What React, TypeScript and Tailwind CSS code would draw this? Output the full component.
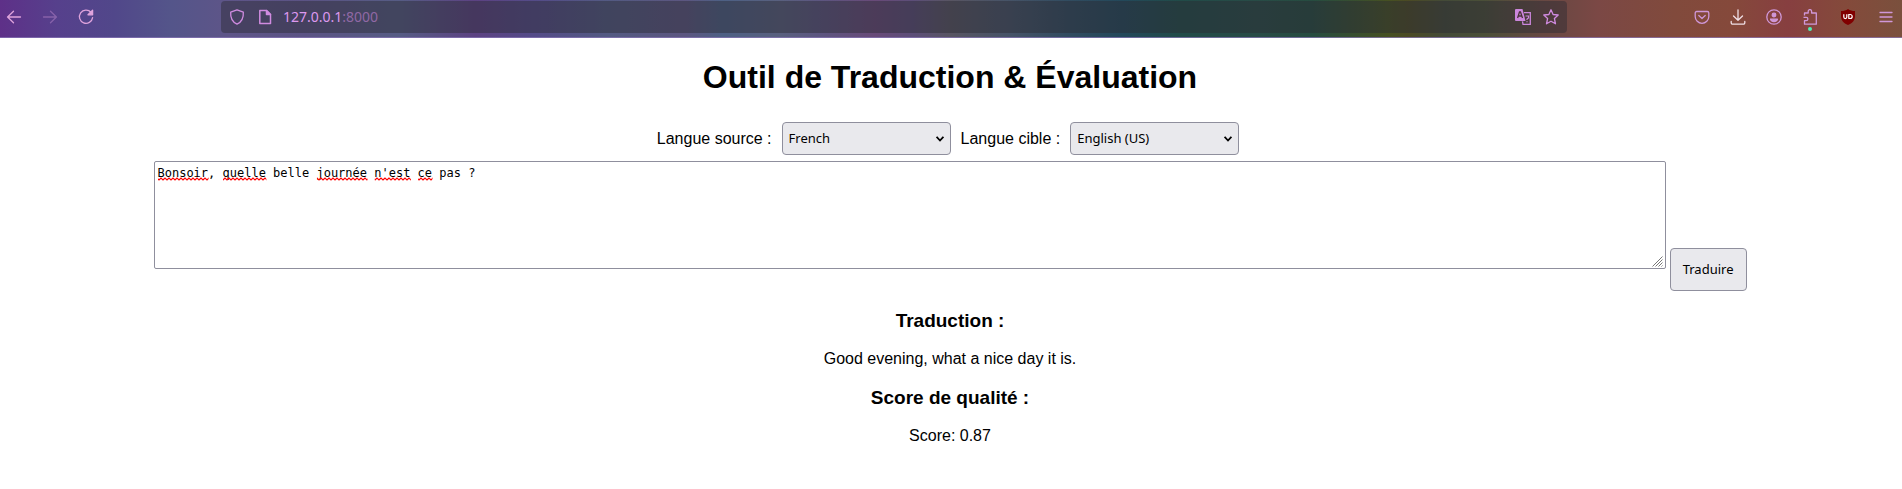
import { useState } from "react";
import type { ReactNode } from "react";

const languages = ["French", "English (US)", "English (UK)", "Spanish", "German"];

const misspelled = [
  { start: 0, length: 7 },
  { start: 9, length: 6 },
  { start: 22, length: 7 },
  { start: 30, length: 5 },
  { start: 36, length: 2 },
];

function Tool({ label, children }: { label: string; children: ReactNode }) {
  return (
    <button type="button" aria-label={label} className="flex size-5 shrink-0 items-center justify-center">
      {children}
    </button>
  );
}

const line = {
  width: 16,
  height: 16,
  viewBox: "0 0 16 16",
  fill: "none",
  stroke: "currentColor",
  strokeWidth: 1.3,
  strokeLinecap: "round" as const,
  strokeLinejoin: "round" as const,
  "aria-hidden": true,
};

function Toolbar() {
  return (
    <header className="flex h-[38px] items-start border-b border-[#8a78b8]/70 bg-[linear-gradient(to_right,#5e3088_0%,#56408c_3%,#51478a_6%,#54558a_9%,#5e5588_12%,#5b5384_16%,#565c84_21%,#5c4282_25%,#544b88_28%,#535a82_32%,#5c5680_36%,#4d6084_38%,#59607e_41%,#5c5680_43%,#684a78_46%,#5c4e78_48%,#585562_50%,#465367_53%,#324c60_56%,#23485a_59%,#214b48_62%,#284b46_66%,#264c40_69%,#465022_73%,#4b4a24_74%,#434a38_76%,#4a4f38_78%,#664842_81%,#7b4845_84%,#814a3c_88%,#85493b_91%,#873f40_94%,#844a3b_97%,#7a503d_100%)] pr-1.5 pl-1 text-[#cf97d8]">
      <nav aria-label="Navigation" className="flex w-[217px] shrink-0 gap-4 pt-[7px]">
        <Tool label="Précédent">
          <svg {...line} className="text-[#dfa3dc]"><path d="M14.5 8h-13M7.5 2.2 1.6 8l5.9 5.8" /></svg>
        </Tool>
        <Tool label="Suivant">
          <svg {...line} className="opacity-40"><path d="M1.5 8h13M8.5 2.2 14.4 8l-5.9 5.8" /></svg>
        </Tool>
        <Tool label="Actualiser">
          <svg {...line} className="text-[#dfa3dc]">
            <path d="M13 3.3A6.6 6.6 0 1 0 14.6 8.6" />
            <path d="M14.6 1.2v4.6H10z" fill="currentColor" />
          </svg>
        </Tool>
      </nav>
      <div className="mt-px flex h-8 min-w-0 flex-1 items-center rounded bg-[#2b2a33]/45 px-1.5 text-[#d08be0]">
        <Tool label="Protection">
          <svg {...line}><path d="M8 .8 14.3 3.2c.4 5.5-1.4 9.6-6.3 12-4.900-2.400-6.700-6.500-6.300-12z" /></svg>
        </Tool>
        <span className="ml-2 flex">
          <Tool label="Informations du site">
            <svg {...line} strokeWidth={1.5}>
              <path d="M2.800 1.500h6.700l4 4v9H2.800z" />
              <path d="M9.500 1.500v4h4z" fill="currentColor" />
            </svg>
          </Tool>
        </span>
        <p className="ml-2 min-w-0 flex-1 font-['Noto_Sans',sans-serif] text-sm text-[#dd98ee]">
          127.0.0.1<span className="text-[#9068a4]">:8000</span>
        </p>
        <span className="flex gap-2">
          <Tool label="Traduire la page">
            <svg width="16" height="16" viewBox="0 0 16 16" aria-hidden="true">
              <path d="M1 0h6.500l3 12H1a1 1 0 0 1-1-1V1a1 1 0 0 1 1-1z" fill="#cb86dc" />
              <path d="M2.600 9 4.500 3h1l2 6M3.300 7h3.500" fill="none" stroke="#4a3238" strokeWidth="1.300" />
              <path d="M9 3.700h6.300v11.600H8l-.500-3" fill="none" stroke="#cb86dc" strokeWidth="1.300" />
              <path d="M10.500 7h3v2l-1.500 1v1M12 12.300v1" fill="none" stroke="#cb86dc" strokeWidth="1.200" />
            </svg>
          </Tool>
          <Tool label="Marquer cette page">
            <svg {...line}><path d="m8 .8 2.100 4.700 5.100.5-3.800 3.500 1.100 5.300L8 12.200l-4.500 2.600 1.100-5.300L.8 6l5.100-.5z" /></svg>
          </Tool>
        </span>
      </div>
      <nav aria-label="Outils" className="ml-[125px] flex shrink-0 gap-[18px] pt-[7px]">
        <div className="flex gap-4">
          <Tool label="Pocket">
            <svg {...line}>
              <path d="M2.700 2.500h10.600a1.500 1.500 0 0 1 1.500 1.500v3.500a6.800 6.800 0 0 1-13.600 0V4a1.500 1.500 0 0 1 1.500-1.500z" />
              <path d="m4.800 6.500 3.200 3 3.200-3" />
            </svg>
          </Tool>
          <Tool label="Téléchargements">
            <svg {...line} className="text-[#f0dfe6]"><path d="M8 .8v10.400M3.500 7 8 11.300 12.500 7M1.200 12.500v1.300a1.400 1.400 0 0 0 1.400 1.400h10.800a1.400 1.400 0 0 0 1.400-1.400v-1.300" /></svg>
          </Tool>
          <Tool label="Compte">
            <svg {...line}>
              <circle cx="8" cy="8" r="7.200" />
              <circle cx="8" cy="6" r="1.800" fill="currentColor" />
              <path d="M4.600 10.200h6.800c-.5 1.600-1.800 2.300-3.400 2.300s-2.900-.7-3.400-2.300z" fill="currentColor" />
            </svg>
          </Tool>
          <Tool label="Extensions">
            <svg width="16" height="24" viewBox="0 0 16 24" fill="none" stroke="currentColor" strokeWidth="1.300" strokeLinejoin="round" aria-hidden="true" className="mt-2 shrink-0">
              <path d="M2.500 6.500V4h3.700V2.300a1.700 1.700 0 0 1 3.400 0V4h4.700v11.200H2.500v-3.500h1.700a1.700 1.700 0 0 0 0-3.400H1.500" />
              <circle cx="8" cy="20" r="2" fill="#4df0b4" stroke="none" />
            </svg>
          </Tool>
        </div>
        <Tool label="uBlock Origin">
          <svg width="16" height="16" viewBox="0 0 16 16" fill="none" aria-hidden="true">
            <path d="M8 0c2 1.500 4 2 7 2v5c0 4.500-2.500 7-7 9-4.500-2-7-4.500-7-9V2c3 0 5-.5 7-2z" fill="#800000" />
            <path d="M3.800 5.200v2.900a1.500 1.500 0 0 0 3 0V5.200M8.800 5.500v4h1.400a2 2 0 0 0 0-4z" stroke="#fff" strokeWidth="1.200" />
          </svg>
        </Tool>
        <Tool label="Menu">
          <svg {...line}><path d="M2 3.500h12M2 8h12M2 12.500h12" /></svg>
        </Tool>
      </nav>
    </header>
  );
}

function LanguageSelect({ id, label, initial }: { id: string; label: string; initial: string }) {
  const [value, setValue] = useState(initial);
  return (
    <div className="flex items-center gap-2.5">
      <label htmlFor={id}>{label}</label>
      <span className="grid items-center">
        <select
          id={id}
          value={value}
          onChange={(e) => setValue(e.target.value)}
          className="col-start-1 row-start-1 h-[33px] w-[169px] appearance-none rounded border border-[#8f8f9d] bg-[#e9e9ed] px-1.5 font-['Noto_Sans',sans-serif] text-[13px]"
        >
          {languages.map((name) => (
            <option key={name}>{name}</option>
          ))}
        </select>
        <svg width="8" height="6" viewBox="0 0 8 6" fill="none" stroke="#000" strokeWidth="1.800" aria-hidden="true" className="pointer-events-none col-start-1 row-start-1 mr-[7px] justify-self-end">
          <path d="m.6.8 3.400 3.700L7.400.8" />
        </svg>
      </span>
    </div>
  );
}

function Squiggles() {
  return (
    <svg width="100%" height="4" aria-hidden="true" className="pointer-events-none absolute top-4 left-1 overflow-visible font-['DejaVu_Sans_Mono',monospace] text-xs">
      <defs>
        <pattern id="wave" width="4" height="4" patternUnits="userSpaceOnUse">
          <path d="M-1 1 1 3 3 1 5 3" fill="none" stroke="#f00" strokeWidth="1.200" />
        </pattern>
      </defs>
      {misspelled.map((word) => (
        <rect key={word.start} x={`${word.start}ch`} width={`${word.length}ch`} height="4" fill="url(#wave)" />
      ))}
    </svg>
  );
}

function ResizeGrip() {
  return (
    <svg width="12" height="12" viewBox="0 0 12 12" fill="none" aria-hidden="true" className="pointer-events-none absolute right-0.5 bottom-0.5 bg-white">
      <path d="M.5 11.500l10-10M3.500 11.500l7-7M6.500 11.500l4-4M9.500 11.500l1-1" stroke="#777" strokeWidth="1" />
    </svg>
  );
}

export default function App() {
  const [text, setText] = useState("Bonsoir, quelle belle journée n'est ce pas ?");
  return (
    <div className="bg-white font-['Liberation_Sans',Arial,sans-serif] text-base text-black">
      <Toolbar />
      <main className="pt-[21px] pr-2.5 pl-2 text-center">
        <h1 className="text-[32px] leading-9 font-bold">Outil de Traduction &amp; Évaluation</h1>
        <form onSubmit={(e) => e.preventDefault()}>
          <div className="mt-[27px] flex justify-center gap-2.5 pr-1">
            <LanguageSelect id="source" label="Langue source :" initial="French" />
            <LanguageSelect id="cible" label="Langue cible :" initial="English (US)" />
          </div>
          <div className="mt-1.5 flex items-end justify-center gap-1">
            <div className="relative mb-[22px] w-[calc(80%+5px)]">
              <textarea
                aria-label="Texte à traduire"
                spellCheck={false}
                value={text}
                onChange={(e) => setText(e.target.value)}
                className="block h-[108px] w-full resize-y rounded-xs border border-[#8f8f9d] bg-white px-[3px] py-1 font-['DejaVu_Sans_Mono',monospace] text-xs leading-[14px]"
              />
              <Squiggles />
              <ResizeGrip />
            </div>
            <button type="submit" className="h-[43px] rounded border border-[#8f8f9d] bg-[#e9e9ed] px-3 font-['Noto_Sans',sans-serif] text-[13px]">
              Traduire
            </button>
          </div>
        </form>
        <h3 className="mt-[19px] text-[19px] leading-[22px] font-bold">Traduction :</h3>
        <p className="mt-[18px] leading-[18px]">Good evening, what a nice day it is.</p>
        <h3 className="mt-[19px] text-[19px] leading-[22px] font-bold">Score de qualité :</h3>
        <p className="mt-[18px] leading-[18px]">Score: 0.87</p>
      </main>
    </div>
  );
}
